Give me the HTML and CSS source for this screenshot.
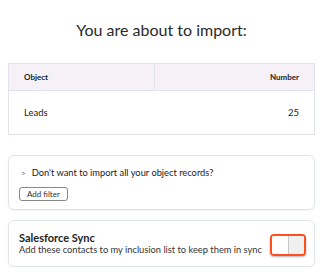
FILE: index.html
```html
<!DOCTYPE html>
<html>
<head>
    <title>Import review</title>
    <link rel="stylesheet" href="styles.css">
</head>
<body>
    <div class="container">
        <h1 class="title">You are about to import:</h1>

        <table class="summary">
            <thead>
                <tr>
                    <th class="col-object">Object</th>
                    <th class="col-number">Number</th>
                </tr>
            </thead>
            <tbody>
                <tr>
                    <td class="col-object">Leads</td>
                    <td class="col-number">25</td>
                </tr>
            </tbody>
        </table>

        <div class="card filter-card">
            <div class="filter-toggle">
                <span class="chevron">&gt;</span>
                <span>Don't want to import all your object records?</span>
            </div>
            <button class="btn-small">Add filter</button>
        </div>

        <div class="card sync-card">
            <div class="sync-text">
                <h2>Salesforce Sync</h2>
                <p>Add these contacts to my inclusion list to keep them in sync</p>
            </div>
            <div class="switch">
                <span class="switch-on"></span>
                <span class="switch-off"></span>
            </div>
        </div>
    </div>
</body>
</html>
```

FILE: styles.css
```css
* {
    margin: 0;
    padding: 0;
    box-sizing: border-box;
    font-family: 'Lato', 'Noto Sans', sans-serif;
}

body {
    background: #fff;
    color: #33475b;
    padding: 0 9px 0 8px;
}

.container {
    width: 100%;
}

.title {
    font-size: 16px;
    font-weight: 400;
    color: #2a2a2a;
    text-align: center;
    padding-top: 20px;
    height: 63px;
    line-height: 20px;
}

.summary {
    width: 100%;
    border-collapse: collapse;
    border: 1px solid #dfe3eb;
    color: #222;
}

.summary th {
    background: #f6f1f7;
    font-size: 8px;
    font-weight: 700;
    height: 27px;
    padding: 0 15px;
    border-bottom: 1px solid #dfe3eb;
}

.summary th.col-object {
    border-right: 1px solid #dfe3eb;
    width: 146px;
}

.summary td {
    height: 44px;
    padding: 0 15px;
    font-size: 9.5px;
}

.col-object {
    text-align: left;
}

.col-number {
    text-align: right;
}

.card {
    border: 1px solid #dfe3eb;
    border-radius: 6px;
    box-shadow: 0 1px 2px rgba(0, 0, 0, 0.05);
}

.filter-card {
    margin-top: 20px;
    height: 55px;
    padding: 11px 10px 0;
}

.filter-toggle {
    display: flex;
    align-items: center;
    gap: 6px;
    font-size: 9.3px;
    color: #222;
    height: 12px;
    line-height: 12px;
}

.chevron {
    font-size: 8px;
    color: #555;
    padding-left: 2px;
}

.btn-small {
    display: block;
    margin-top: 8px;
    font-size: 8px;
    color: #333;
    background: #fff;
    border: 1px solid #888;
    border-radius: 3px;
    padding: 0 7px;
    height: 14px;
    line-height: 12px;
}

.sync-card {
    margin-top: 10px;
    height: 47px;
    display: flex;
    align-items: center;
    justify-content: space-between;
    padding: 0 8px 0 10px;
}

.sync-text h2 {
    font-size: 11px;
    font-weight: 700;
    color: #222;
    line-height: 13px;
}

.sync-text p {
    font-size: 9.3px;
    color: #333;
    line-height: 12px;
}

.switch {
    display: flex;
    width: 36px;
    height: 22px;
    border: 2px solid #ff4f1f;
    border-radius: 4px;
    overflow: hidden;
    margin-top: 2px;
    box-shadow: 0 1px 2px rgba(0, 0, 0, 0.3);
}

.switch-on {
    flex: 1;
    background: #fff;
    border-right: 1px solid #c8c8c8;
}

.switch-off {
    flex: 1;
    background: #f0f0f0;
}
```
